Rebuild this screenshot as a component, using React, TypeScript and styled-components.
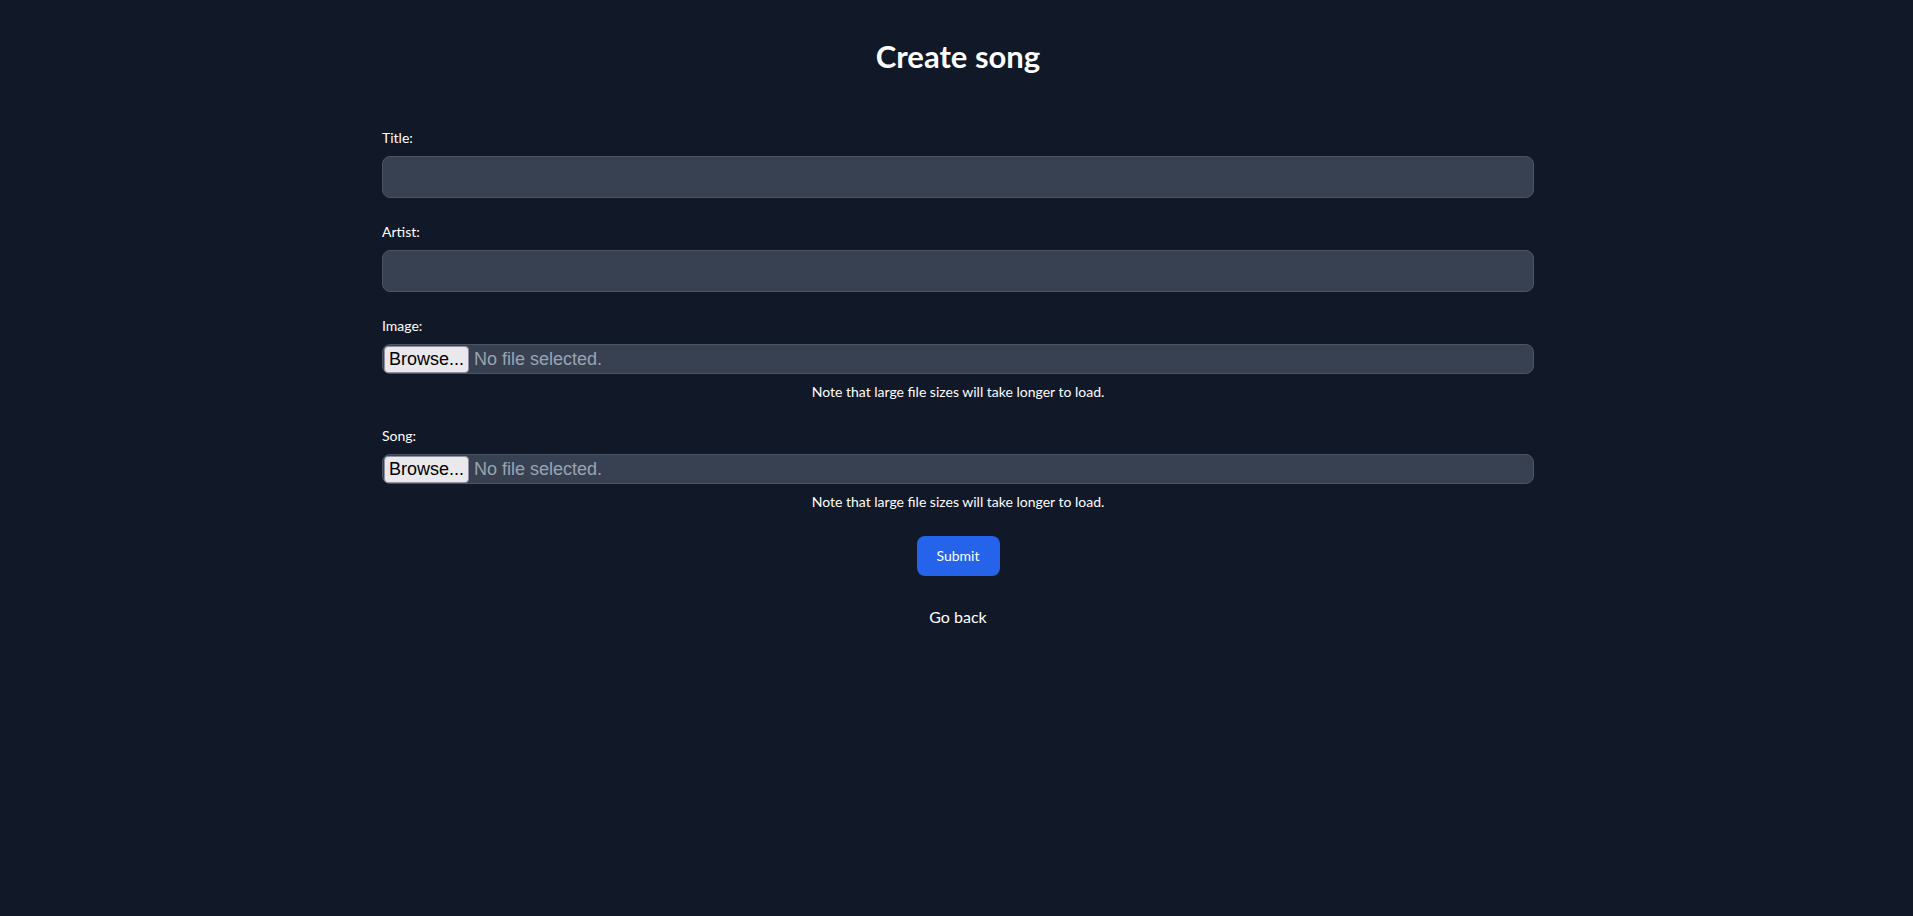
import React from 'react';
import styled, { createGlobalStyle } from 'styled-components';

const GlobalStyle = createGlobalStyle`
  html, body {
    margin: 0;
    padding: 0;
    background: #111827;
  }
  body {
    font-family: Lato, 'Noto Sans', sans-serif;
    color: #ffffff;
  }
  * {
    box-sizing: border-box;
  }
`;

function FileField(props: { id: string; label: string }) {
  const { id, label } = props;

  return (
    <Field>
      <Label htmlFor={id}>{label}</Label>
      <FileBox htmlFor={id}>
        <HiddenInput id={id} type='file' />
        <BrowseButton>Browse...</BrowseButton>
        <FileName>No file selected.</FileName>
      </FileBox>
      <Note>Note that large file sizes will take longer to load.</Note>
    </Field>
  );
}

export default function App() {
  return (
    <Page>
      <GlobalStyle />
      <Heading>Create song</Heading>

      <Form onSubmit={(e) => e.preventDefault()}>
        <Field>
          <Label htmlFor='title'>Title:</Label>
          <TextInput id='title' type='text' />
        </Field>

        <Field>
          <Label htmlFor='artist'>Artist:</Label>
          <TextInput id='artist' type='text' />
        </Field>

        <FileField id='image' label='Image:' />
        <FileField id='song' label='Song:' />

        <Actions>
          <SubmitButton type='submit'>Submit</SubmitButton>
          <BackLink href='#'>Go back</BackLink>
        </Actions>
      </Form>
    </Page>
  );
}

const Page = styled.div`
  min-height: 100vh;
  padding: 38px 0 0 3px;
  background: #111827;
`;

const Heading = styled.h1`
  margin: 0 0 54px;
  font-size: 31px;
  line-height: 36px;
  font-weight: 700;
  text-align: center;
  color: #ffffff;
`;

const Form = styled.form`
  max-width: 1152px;
  margin: 0 auto;
`;

const Field = styled.div`
  margin-bottom: 24px;
`;

const Label = styled.label`
  display: block;
  margin-bottom: 8px;
  font-size: 14px;
  line-height: 20px;
  color: #ffffff;
`;

const TextInput = styled.input`
  display: block;
  width: 100%;
  padding: 10px;
  font-family: inherit;
  font-size: 14px;
  line-height: 20px;
  color: #ffffff;
  background: #374151;
  border: 1px solid #4b5563;
  border-radius: 8px;
  outline: none;
`;

const FileBox = styled.label`
  display: flex;
  align-items: center;
  gap: 5px;
  height: 30px;
  padding: 0 1px;
  font-family: 'Liberation Sans', Arial, sans-serif;
  font-size: 18px;
  background: #374151;
  border: 1px solid #4b5563;
  border-radius: 8px;
  cursor: pointer;
`;

const HiddenInput = styled.input`
  display: none;
`;

const BrowseButton = styled.span`
  display: flex;
  align-items: center;
  height: 27px;
  padding: 0 4px;
  color: #000000;
  background: #e9e9ed;
  border: 1px solid #8f8f9d;
  border-radius: 4px;
`;

const FileName = styled.span`
  color: #9ca3af;
`;

const Note = styled.p`
  margin: 8px 0 0;
  font-size: 14px;
  line-height: 20px;
  text-align: center;
  color: #ffffff;
`;

const Actions = styled.div`
  display: flex;
  flex-direction: column;
  align-items: center;
  gap: 29px;
`;

const SubmitButton = styled.button`
  padding: 10px 20px;
  font-family: inherit;
  font-size: 14px;
  line-height: 20px;
  color: #ffffff;
  background: #2563eb;
  border: none;
  border-radius: 8px;
  cursor: pointer;

  &:hover {
    background: #1d4ed8;
  }
`;

const BackLink = styled.a`
  font-size: 16px;
  line-height: 24px;
  color: #ffffff;
  text-decoration: none;
`;
